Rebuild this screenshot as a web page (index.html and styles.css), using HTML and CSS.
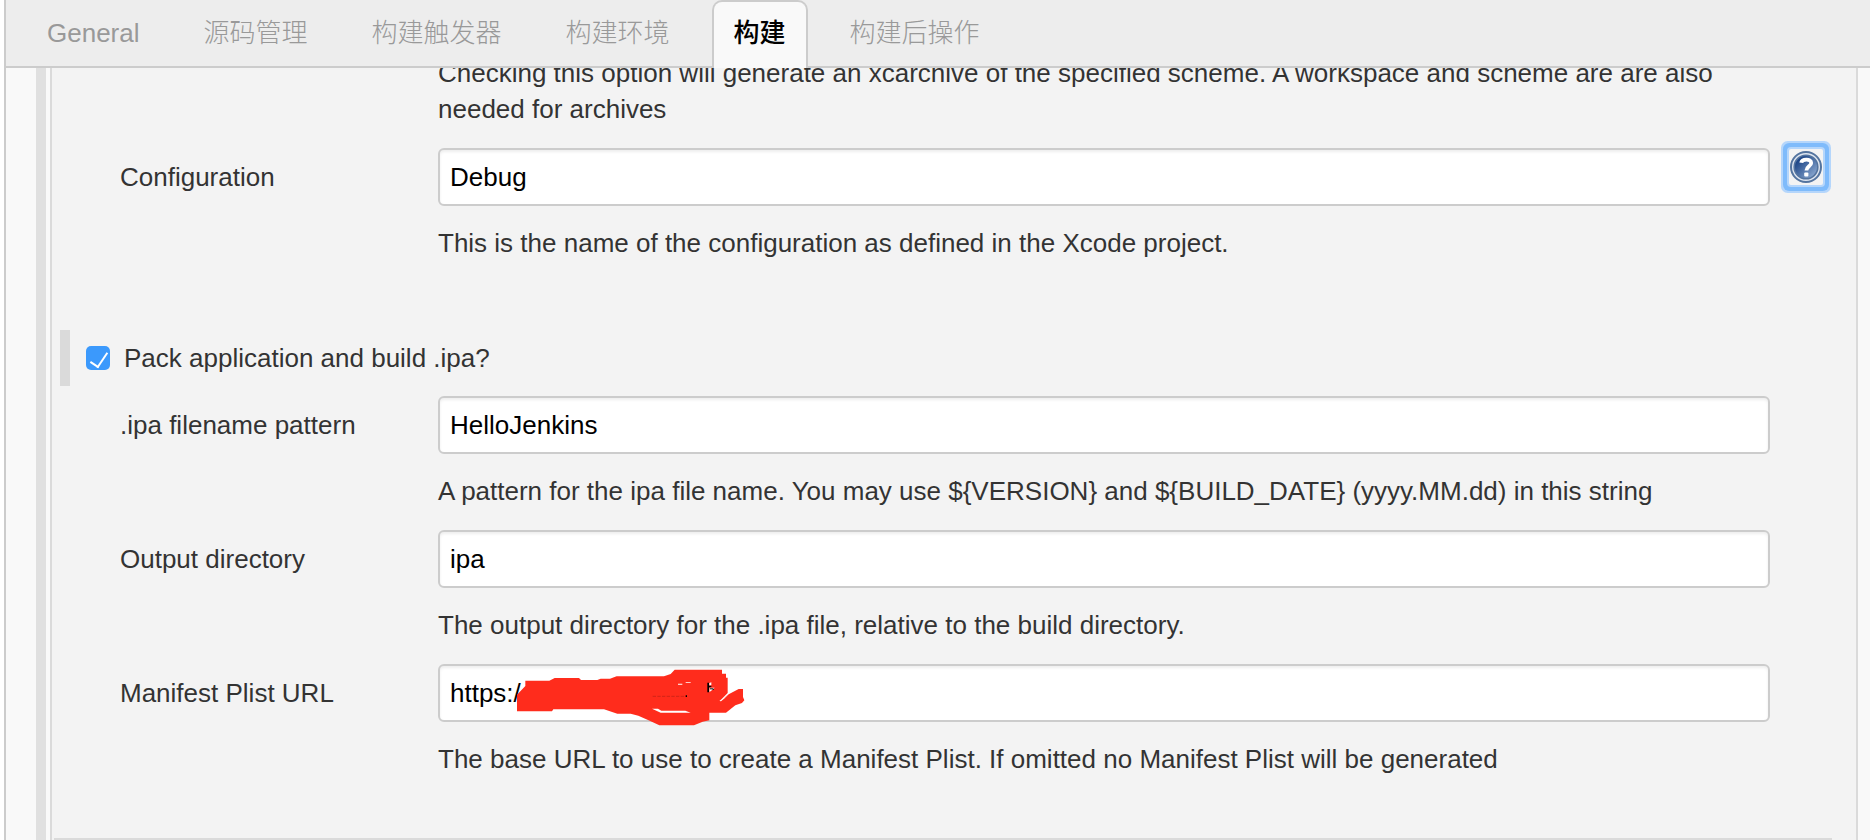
FILE: index.html
```html
<!DOCTYPE html>
<html lang="zh-CN">
<head>
<meta charset="utf-8">
<title>构建</title>
<link rel="stylesheet" href="styles.css">
</head>
<body>
<div class="page">
  <nav class="tabs">
    <a class="tab" href="#general">General</a>
    <a class="tab" href="#scm">源码管理</a>
    <a class="tab" href="#triggers">构建触发器</a>
    <a class="tab" href="#environment">构建环境</a>
    <a class="tab tab-active" href="#build" aria-current="page">构建</a>
    <a class="tab" href="#post-build">构建后操作</a>
  </nav>
  <main class="content">
    <div class="drag-handle"></div>
    <form class="panel">
      <div class="row">
        <p class="help">Checking this option will generate an xcarchive of the specified scheme. A workspace and scheme are are also needed for archives</p>
      </div>
      <div class="row">
        <label class="label" for="configuration">Configuration</label>
        <input class="field" id="configuration" type="text" value="Debug">
        <button class="help-button" type="button" aria-label="Help">
          <svg class="help-icon" viewBox="0 0 32 32" aria-hidden="true">
            <defs>
              <linearGradient id="disc" x1="0" y1="0" x2="1" y2="1">
                <stop offset="0.2" stop-color="#1f4788"/>
                <stop offset="1" stop-color="#9db9dc"/>
              </linearGradient>
            </defs>
            <circle cx="16" cy="16" r="15" fill="#dfe6f0" stroke="#54749f" stroke-width="2"/>
            <circle cx="16" cy="16" r="11.8" fill="url(#disc)" stroke="#54749f" stroke-width="1.6"/>
            <path d="M11.2 11.8c.6-4 10-4.600 10 .2 0 3.400-4.800 3.400-4.800 7.600" fill="none" stroke="#fff" stroke-width="3.800"/>
            <rect x="14.200" y="21.600" width="4.200" height="4" rx="1" fill="#fff"/>
          </svg>
        </button>
        <p class="help">This is the name of the configuration as defined in the Xcode project.</p>
      </div>
      <div class="option">
        <span class="marker"></span>
        <input class="checkbox" id="pack" type="checkbox" checked>
        <label for="pack">Pack application and build .ipa?</label>
      </div>
      <div class="row">
        <label class="label" for="pattern">.ipa filename pattern</label>
        <input class="field" id="pattern" type="text" value="HelloJenkins">
        <p class="help">A pattern for the ipa file name. You may use ${VERSION} and ${BUILD_DATE} (yyyy.MM.dd) in this string</p>
      </div>
      <div class="row">
        <label class="label" for="output">Output directory</label>
        <input class="field" id="output" type="text" value="ipa">
        <p class="help">The output directory for the .ipa file, relative to the build directory.</p>
      </div>
      <div class="row">
        <label class="label" for="manifest">Manifest Plist URL</label>
        <div class="field-wrap">
          <input class="field" id="manifest" type="text" value="https:/">
          <svg class="scribble" viewBox="291 88 684 171" aria-hidden="true">
            <path fill="#ff2c1c" d="M316 123H388L404 115H477L483 121H532L542 117H570L590 110H732L752 103L764 90H906V102H918V114H923V160L900 183L926 164L956 148H969V172L973 182L966 190L946 197L918 219H868V242L848 246L822 257H718L684 241L655 228L632 222H592L552 209H400L396 215H291V165L316 139Z"/>
            <path fill="#fff" d="M696 207H714L724 213H796L812 219H722ZM774 132L787 132V135H774ZM797 127H812V129H797ZM898 184L926 163L914 176L903 185Z"/>
            <path fill="none" stroke="#a31f14" stroke-width="1.500" stroke-dasharray="10 4" d="M698 170H794"/>
            <path fill="#000" d="M797 167H801V172H797ZM862 129H867V138H874V143H867V158H862ZM875 147H881V151H875Z"/>
            <path fill="#fff" d="M868 130L874 128V137H868ZM869 144H884L872 155L868 156Z"/>
            <path fill="#000" d="M870 146H880V149H870Z"/>
          </svg>
        </div>
        <p class="help">The base URL to use to create a Manifest Plist. If omitted no Manifest Plist will be generated</p>
      </div>
      <hr class="divider">
    </form>
  </main>
</div>
</body>
</html>
```
FILE: styles.css
```css
* {
  box-sizing: border-box;
}

body {
  margin: 0;
  overflow: hidden;
  background: #fff;
  color: #333;
  font: 26px/36px "Liberation Sans", "Noto Sans CJK SC", sans-serif;
}

.page {
  display: flex;
  flex-direction: column;
  min-height: 100vh;
  margin-left: 4px;
  border-left: 2px solid #ccc;
  background: #f9f9f9;
}

.tabs {
  position: relative;
  z-index: 1;
  display: flex;
  gap: 20px;
  height: 68px;
  padding-left: 19px;
  border-bottom: 2px solid #ccc;
  background: #ededed;
}

.tab {
  height: 68px;
  padding: 13px 20px;
  border: 2px solid transparent;
  border-bottom: 0;
  color: #999;
  font-weight: 300;
  text-decoration: none;
  white-space: nowrap;
}

.tab-active {
  border-color: #ccc;
  border-radius: 10px 10px 0 0;
  background: #f9f9f9;
  color: #000;
  font-weight: 500;
}

.content {
  display: flex;
  flex: 1;
  gap: 4px;
  margin-top: -13px;
  padding: 0 12px 0 30px;
}

.drag-handle {
  width: 10px;
  background: #e0e0e0;
}

.panel {
  flex: 1;
  border: solid #dadada;
  border-width: 0 2px;
  background: #f3f3f3;
}

.row {
  display: grid;
  grid-template-columns: 318px 1fr 86px;
  align-items: center;
  padding-left: 68px;
}

.help {
  grid-column: 2;
  margin: 0 0 21px;
}

.field ~ .help,
.field-wrap ~ .help {
  margin-top: 19px;
}

.field-wrap {
  position: relative;
}

.field {
  display: block;
  width: 100%;
  height: 58px;
  padding: 0 10px;
  border: 2px solid #ccc;
  border-radius: 6px;
  background: #fff;
  box-shadow: inset 0 2px 3px #eee;
  color: #000;
  font: inherit;
}

.help-button {
  align-self: start;
  width: 34px;
  height: 36px;
  margin: 1px 0 0 19px;
  padding: 2px 1px;
  border: 0;
  border-radius: 2px;
  background: #f3f3f3;
  box-shadow: 0 0 0 2px #b5d6fb, 0 0 0 6px #7fbbfb, 0 0 0 8px #b5d6fb;
}

.help-icon {
  display: block;
  width: 32px;
  height: 32px;
}

.option {
  display: flex;
  align-items: center;
  height: 56px;
  margin: 48px 0 10px;
  padding-left: 8px;
}

.marker {
  width: 10px;
  height: 56px;
  margin-right: 16px;
  background: #dadada;
}

.checkbox {
  appearance: none;
  width: 24px;
  height: 24px;
  margin: 0 14px 0 0;
  border-radius: 5px;
  background: #3b99fc;
}

.checkbox:checked::before {
  content: "";
  display: block;
  width: 8px;
  height: 16px;
  margin: 3px 8px;
  border: solid #fff;
  border-width: 0 2px 2px 0;
  transform: rotate(34deg);
}

.scribble {
  position: absolute;
  top: 5px;
  left: 79px;
  width: 228px;
  height: 57px;
}

.divider {
  height: 2px;
  margin: 40px 24px 0 2px;
  border: 0;
  background: #dadada;
}
```
